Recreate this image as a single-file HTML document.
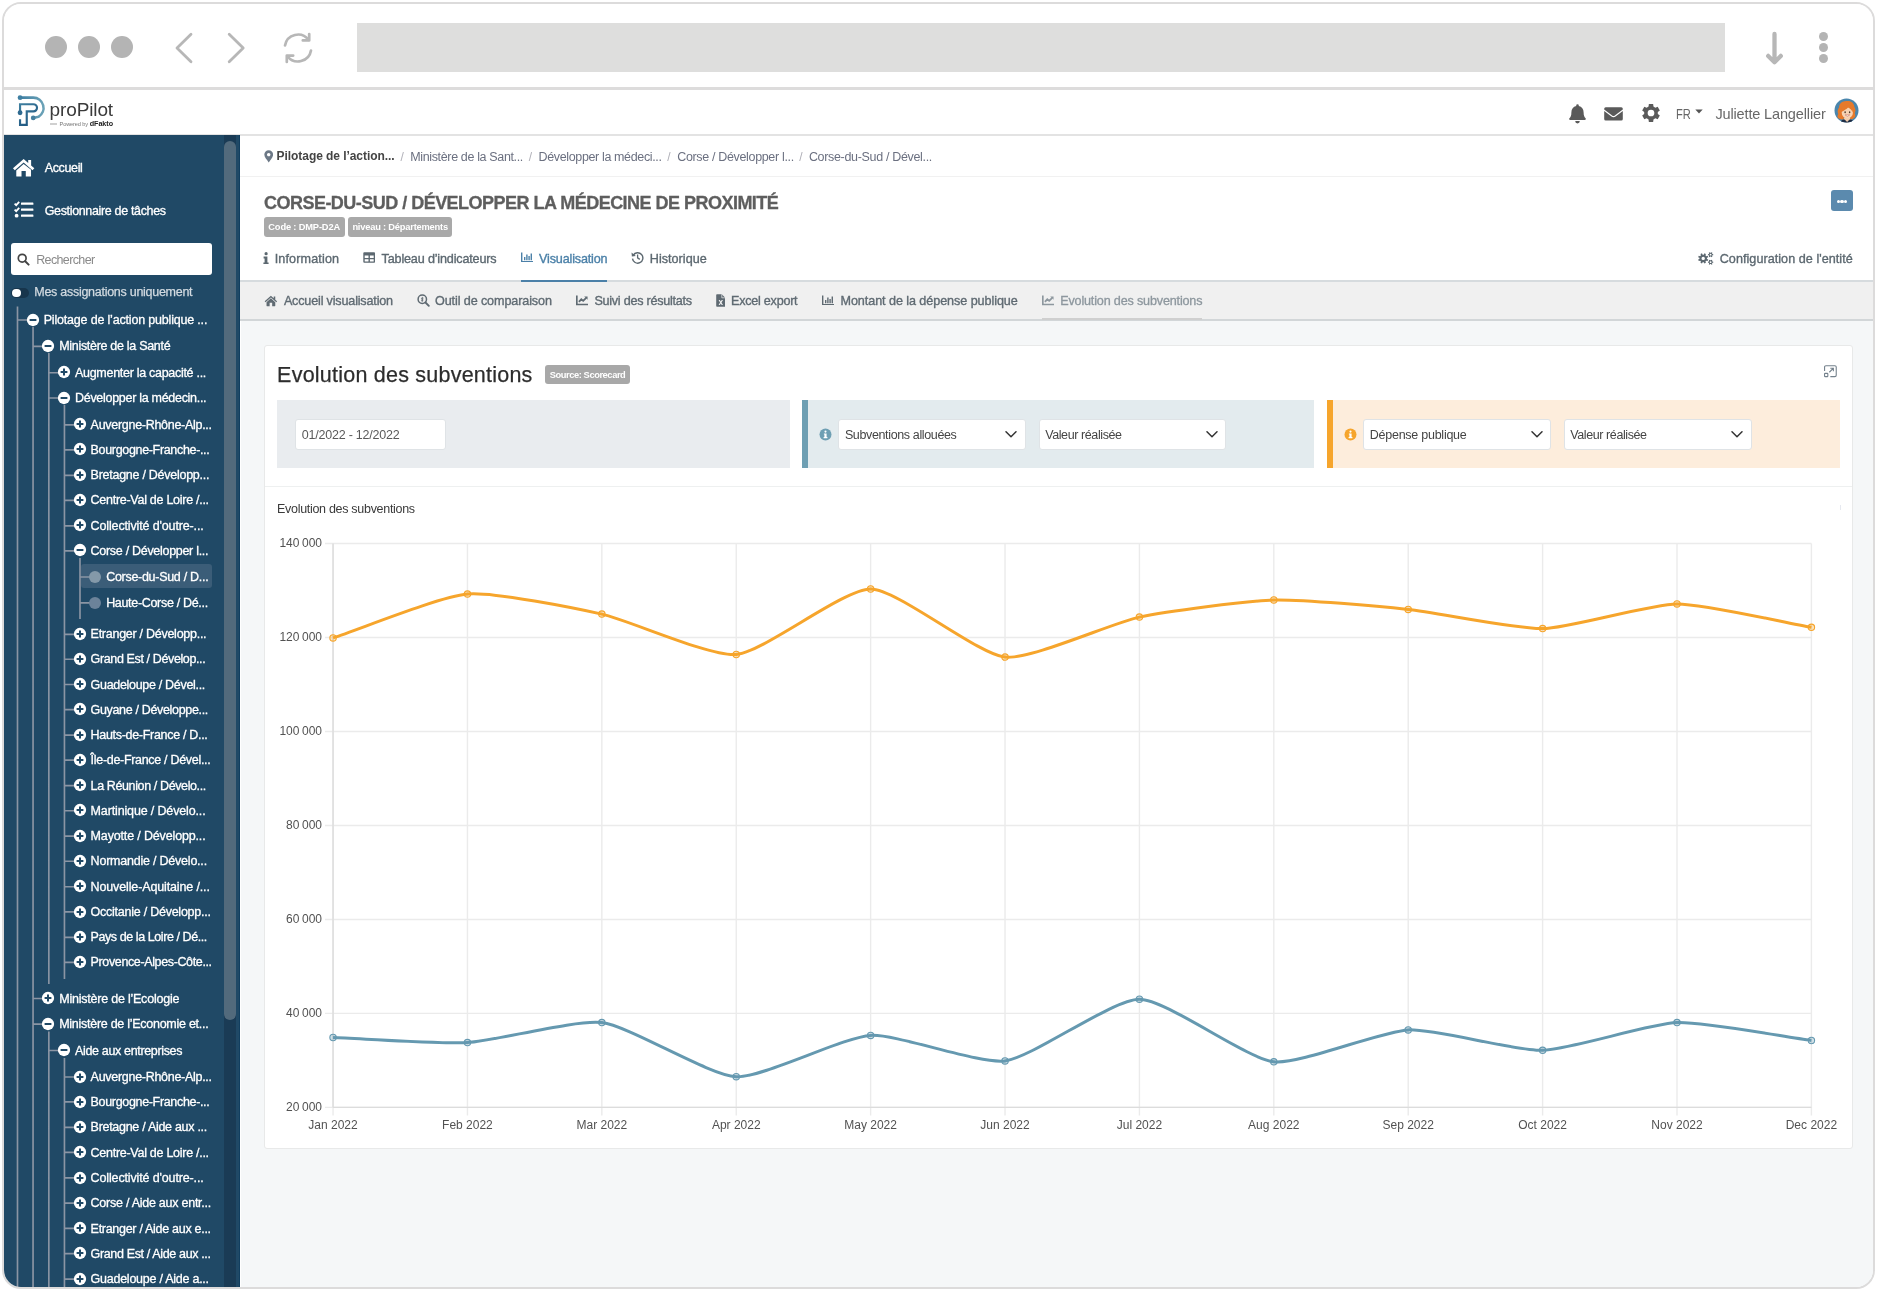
<!DOCTYPE html>
<html><head><meta charset="utf-8"><title>proPilot</title><style>
html,body{margin:0;padding:0;background:#fff;}
body{width:1879px;height:1293px;overflow:hidden;position:relative;font-family:"Liberation Sans",sans-serif;}
#frame{position:absolute;left:2px;top:2px;width:1869px;height:1283px;border:2px solid #dcdbdb;border-radius:19px;overflow:hidden;background:#fff;}
#in{position:absolute;left:-4px;top:-4px;width:1879px;height:1293px;will-change:transform;}
.b{position:absolute;display:block;}
.t{position:absolute;white-space:nowrap;font-family:"Liberation Sans",sans-serif;}
</style></head><body><div id="frame"><div id="in">
<div class="b" style="left:4.00px;top:4.00px;width:1869.00px;height:83.00px;background:#fff;"></div>
<div class="b" style="left:4.00px;top:87.00px;width:1869.00px;height:3.00px;background:#dddcdc;"></div>
<div class="b" style="left:45.10px;top:36.10px;width:21.80px;height:21.80px;background:#b4b4b4;border-radius:50%;"></div>
<div class="b" style="left:78.10px;top:36.10px;width:21.80px;height:21.80px;background:#b4b4b4;border-radius:50%;"></div>
<div class="b" style="left:111.10px;top:36.10px;width:21.80px;height:21.80px;background:#b4b4b4;border-radius:50%;"></div>
<svg class="b" style="left:170.00px;top:28.00px;" width="90.00" height="40.00" viewBox="170 28 90 40"><path d="M191,34.2 L177,48 L191,61.8 M229.2,34.2 L243.2,48 L229.2,61.8" fill="none" stroke="#b7b7b7" stroke-width="2.8" stroke-linecap="round" stroke-linejoin="round"/></svg>
<svg class="b" style="left:280.00px;top:30.00px;" width="36.00" height="36.00" viewBox="-18 -18 36 36"><g fill="none" stroke="#b7b7b7" stroke-width="2.7" stroke-linecap="round" stroke-linejoin="round"><path d="M-13,-2.5 A13.2,13.2 0 0 1 10.5,-8.2"/><path d="M13,2.5 A13.2,13.2 0 0 1 -10.5,8.2"/><path d="M11.2,-14 L11.2,-7.6 L4.8,-7.6"/><path d="M-11.2,14 L-11.2,7.6 L-4.8,7.6"/></g></svg>
<div class="b" style="left:357.00px;top:23.00px;width:1368.00px;height:49.00px;background:#dededd;"></div>
<svg class="b" style="left:1760.00px;top:28.00px;" width="30.00" height="40.00" viewBox="1760 28 30 40"><path d="M1774.5,34 V61.5 M1768.2,55.9 L1774.5,62.2 L1780.8,55.9" fill="none" stroke="#b7b7b7" stroke-width="4.3" stroke-linecap="round" stroke-linejoin="round"/></svg>
<div class="b" style="left:1819.00px;top:31.80px;width:9.00px;height:9.00px;background:#b4b4b4;border-radius:50%;"></div>
<div class="b" style="left:1819.00px;top:42.60px;width:9.00px;height:9.00px;background:#b4b4b4;border-radius:50%;"></div>
<div class="b" style="left:1819.00px;top:54.20px;width:9.00px;height:9.00px;background:#b4b4b4;border-radius:50%;"></div>
<div class="b" style="left:4.00px;top:90.00px;width:1869.00px;height:44.00px;background:#fff;"></div>
<div class="b" style="left:4.00px;top:134.00px;width:1869.00px;height:2.00px;background:#e3e3e3;"></div>
<svg class="b" style="left:14.00px;top:92.00px;" width="36.00" height="38.00" viewBox="14 92 36 38"><defs><linearGradient id="lg1" x1="0" y1="0" x2="1" y2="0"><stop offset="0" stop-color="#3f7fa2"/><stop offset="1" stop-color="#6ba2b7"/></linearGradient>
<linearGradient id="lg2" x1="0" y1="0" x2="0.6" y2="1"><stop offset="0" stop-color="#3f7f9f"/><stop offset="1" stop-color="#1f5781"/></linearGradient></defs>
<g fill="none">
<path d="M20.1,97.63 H33.3 A10.3,10.3 0 0 1 38.45,116.8 L33.3,117.9" stroke="url(#lg1)" stroke-width="2.6" stroke-linecap="round" stroke-linejoin="round"/>
<path d="M20.05,112.7 V104.2 H33.4 A3.62,3.62 0 0 1 33.4,111.44 H26.75 V124.9 H20.05 V119.2" stroke="url(#lg2)" stroke-width="2.15" stroke-linejoin="miter" stroke-linecap="butt"/>
</g>
<circle cx="20.07" cy="97.63" r="2.4" fill="#3f7fa2"/>
<circle cx="20.07" cy="112.74" r="2.4" fill="#2f6a90"/>
<circle cx="33.23" cy="117.94" r="2.4" fill="#447f9f"/></svg>
<span class="t" style="left:49.60px;top:94.54px;font-size:19px;line-height:30px;color:#3a3a3a;letter-spacing:-0.128px;">proPilot</span>
<div class="b" style="left:49.50px;top:123.30px;width:7.30px;height:1.30px;background:#d0d0d0;"></div>
<span class="t" style="left:59.60px;top:120.00px;font-size:5.6px;line-height:9px;color:#777;letter-spacing:-0.117px;">Powered by</span>
<span class="t" style="left:89.80px;top:118.23px;font-size:7.2px;line-height:12px;color:#222;letter-spacing:-0.067px;font-weight:700;">dFakto</span>
<svg class="b" style="left:1567.00px;top:102.00px;" width="21.00" height="23.00" viewBox="-10.5 -11.5 21 23"><path d="M0,-9.3 a1.3,1.3 0 0 1 1.3,1.3 v0.5 c3,0.7 4.8,3.2 4.8,6.3 c0,3.8 1,5 2,6 c0.5,0.5 0.2,1.6 -0.7,1.6 h-14.8 c-0.9,0 -1.2,-1.1 -0.7,-1.6 c1,-1 2,-2.2 2,-6 c0,-3.1 1.8,-5.6 4.8,-6.3 v-0.5 a1.3,1.3 0 0 1 1.3,-1.3z M-2.3,7.6 h4.6 a2.3,2.3 0 0 1 -4.6,0z" fill="#5a5a5a"/></svg>
<svg class="b" style="left:1604.30px;top:105.60px;" width="19.00" height="16.15" viewBox="0 0 20 17"><path d="M1.8,1.2 h16.4 a1.6,1.6 0 0 1 1.6,1.6 v0.9 l-8.4,6.4 a2.3,2.3 0 0 1 -2.8,0 l-8.4,-6.4 v-0.9 a1.6,1.6 0 0 1 1.6,-1.6z M0.2,5.3 l7.3,5.6 a4,4 0 0 0 5,0 l7.3,-5.6 v8.4 a1.6,1.6 0 0 1 -1.6,1.6 h-16.4 a1.6,1.6 0 0 1 -1.6,-1.6z" fill="#5a5a5a"/></svg>
<svg class="b" style="left:1640.90px;top:103.10px;" width="20.00" height="20.00" viewBox="-10 -10 20 20"><path fill-rule="evenodd" d="M2.45,6.45 L2.14,8.95 L-2.14,8.95 L-2.45,6.45 L-4.36,5.35 L-6.68,6.33 L-8.82,2.62 L-6.81,1.10 L-6.81,-1.10 L-8.82,-2.62 L-6.68,-6.33 L-4.36,-5.35 L-2.45,-6.45 L-2.14,-8.95 L2.14,-8.95 L2.45,-6.45 L4.36,-5.35 L6.68,-6.33 L8.82,-2.62 L6.81,-1.10 L6.81,1.10 L8.82,2.62 L6.68,6.33 L4.36,5.35Z M-3.35,0.00 a3.35,3.35 0 1,0 6.70,0 a3.35,3.35 0 1,0 -6.70,0Z" fill="#5a5a5a"/></svg>
<span class="t" style="left:1676.20px;top:103.16px;font-size:14.2px;line-height:23px;color:#666;letter-spacing:0.000px;transform:scaleX(0.7819);transform-origin:0 50%;">FR</span>
<svg class="b" style="left:1695.00px;top:109.00px;" width="8.00" height="5.00" viewBox="0 0 8 5"><path d="M0.3,0.6 H7.7 L4,4.4Z" fill="#555"/></svg>
<span class="t" style="left:1715.40px;top:103.16px;font-size:14.5px;line-height:23px;color:#686868;letter-spacing:-0.140px;">Juliette Langellier</span>
<svg class="b" style="left:1833.80px;top:98.40px;" width="25.00" height="25.00" viewBox="-12.5 -12.5 25 25"><defs><clipPath id="avc"><circle cx="0" cy="0" r="12"/></clipPath></defs>
<circle cx="0" cy="0" r="12" fill="#4a86ad"/>
<g clip-path="url(#avc)">
<path d="M-6.2,8.6 C-9.6,8.2 -9.4,5.2 -8.2,3.6 C-9.6,1.2 -8.6,-1.6 -7.4,-3 C-7.6,-7 -3.6,-10 0.6,-9.4 C4.2,-10 7.6,-7.4 7.8,-3.8 C9.4,-1.6 9.2,1 8.2,2.8 C9.4,4.8 8.8,7.6 6.4,8.2 C5.2,9.2 3.4,8.8 3,7.6 L-2.6,7.8 C-3,9 -5,9.4 -6.2,8.6Z" fill="#e67a2b"/>
<path d="M-2.4,7 L-2.8,10.6 L0.6,12.6 L4,10.6 L3.4,7Z" fill="#f3cdaa"/>
<ellipse cx="0.8" cy="2.2" rx="5.6" ry="5.8" fill="#f6d4b4"/>
<path d="M-5.2,1.6 C-5.4,-3.8 -1,-5.8 2.4,-5 C5.4,-4.4 6.8,-1.6 6.2,1.4 C5,-0.8 3.4,-2.2 1.6,-3 C0.2,-1.4 -2.6,0.2 -5.2,1.6Z" fill="#e67a2b"/>
<path d="M-6,13 C-5.6,9.6 -3.6,8.8 -1.6,9.2 L0.6,11.4 L2.8,9.2 C4.8,8.8 6.8,9.6 7.2,13Z" fill="#1f2d45"/>
<ellipse cx="-1.4" cy="1.8" rx="0.75" ry="0.95" fill="#4a3528"/><ellipse cx="3.1" cy="1.8" rx="0.75" ry="0.95" fill="#4a3528"/>
<path d="M-1.4,4.4 Q0.9,7.2 3.2,4.4Z" fill="#fff" stroke="#c0604a" stroke-width="0.5"/>
</g></svg>
<div class="b" style="left:4.00px;top:135.00px;width:236.00px;height:1158.00px;background:#204966;"></div>
<div class="b" style="left:224.20px;top:135.00px;width:11.80px;height:1158.00px;background:#1a3b55;"></div>
<div class="b" style="left:224.20px;top:141.00px;width:11.80px;height:878.80px;background:#526a7c;border-radius:6px;"></div>
<div class="b" style="left:239.20px;top:135.00px;width:0.80px;height:1158.00px;background:#123f60;"></div>
<svg class="b" style="left:11.70px;top:156.40px;" width="23.30" height="23.30" viewBox="0 0 24 24"><path d="M12,3 L1,12.6 L2.9,14.8 L12,6.8 L21.1,14.8 L23,12.6 L19.7,9.7 V4.2 H16.7 V7.1 Z" fill="#fff"/><path d="M12,8.3 L4.4,14.9 V20.6 a0.6,0.6 0 0 0 0.6,0.6 H9.8 V15.4 H14.2 V21.2 H19 a0.6,0.6 0 0 0 0.6,-0.6 V14.2 Z" fill="#fff"/></svg>
<span class="t" style="left:44.70px;top:158.22px;font-size:12.5px;line-height:20px;color:#ffffff;letter-spacing:-0.357px;-webkit-text-stroke:0.3px #ffffff;">Accueil</span>
<svg class="b" style="left:13.60px;top:200.80px;" width="20.00" height="17.50" viewBox="0 0 20 17.5"><g fill="#fff"><rect x="7" y="1.6" width="12.4" height="2.2" rx="0.4"/><rect x="7" y="7.6" width="12.4" height="2.2" rx="0.4"/><rect x="7" y="13.6" width="12.4" height="2.2" rx="0.4"/><circle cx="2.6" cy="14.7" r="1.9"/></g>
<path d="M0.6,2.6 L2.2,4.2 L5.2,0.9 M0.6,8.6 L2.2,10.2 L5.2,6.9" stroke="#fff" stroke-width="1.8" fill="none"/></svg>
<span class="t" style="left:44.70px;top:200.82px;font-size:12.5px;line-height:20px;color:#ffffff;letter-spacing:-0.343px;-webkit-text-stroke:0.3px #ffffff;">Gestionnaire de tâches</span>
<div class="b" style="left:11.00px;top:243.00px;width:201.20px;height:31.60px;background:#fff;border-radius:3px;"></div>
<svg class="b" style="left:16.50px;top:253.00px;" width="13.00" height="13.00" viewBox="0 0 13 13"><circle cx="5.2" cy="5.2" r="3.9" fill="none" stroke="#444" stroke-width="1.7"/><path d="M8.2,8.2 L11.6,11.6" stroke="#444" stroke-width="2" stroke-linecap="round"/></svg>
<span class="t" style="left:36.20px;top:249.82px;font-size:12.5px;line-height:20px;color:#8a8a8a;letter-spacing:-0.631px;">Rechercher</span>
<div class="b" style="left:11.30px;top:288.30px;width:17.70px;height:9.80px;background:#17354c;border-radius:5px;"></div>
<div class="b" style="left:12.10px;top:288.90px;width:8.60px;height:8.60px;background:#fff;border-radius:50%;"></div>
<span class="t" style="left:34.30px;top:282.42px;font-size:12.5px;line-height:20px;color:#d3dbe1;letter-spacing:-0.273px;-webkit-text-stroke:0.25px #d3dbe1;">Mes assignations uniquement</span>
<div class="b" style="left:81.00px;top:564.20px;width:131.10px;height:23.60px;background:#3b5d78;border-radius:3px;"></div>
<svg class="b" style="left:4.00px;top:135.00px;" width="236.00" height="1158.00" viewBox="4 135 236 1158"><path d="M17.50,306.50 V1293.00 M33.05,327.00 V1293.00 M48.85,353.00 V984.00 M64.45,405.00 V979.00 M80.00,558.00 V619.00 M48.85,1031.50 V1293.00 M64.45,1058.00 V1293.00 M17.50,320.00 H27.75 M33.05,346.30 H43.30 M48.85,372.70 H59.10 M48.85,398.00 H59.10 M64.45,424.80 H74.70 M64.45,449.80 H74.70 M64.45,475.30 H74.70 M64.45,500.30 H74.70 M64.45,525.80 H74.70 M64.45,550.80 H74.70 M80.00,577.00 H90.25 M80.00,602.90 H90.25 M64.45,634.30 H74.70 M64.45,659.20 H74.70 M64.45,684.50 H74.70 M64.45,709.60 H74.70 M64.45,735.10 H74.70 M64.45,760.10 H74.70 M64.45,785.60 H74.70 M64.45,810.70 H74.70 M64.45,836.10 H74.70 M64.45,861.20 H74.70 M64.45,886.70 H74.70 M64.45,911.90 H74.70 M64.45,937.30 H74.70 M64.45,962.30 H74.70 M33.05,998.50 H43.30 M33.05,1024.10 H43.30 M48.85,1050.50 H59.10 M64.45,1077.00 H74.70 M64.45,1101.90 H74.70 M64.45,1127.30 H74.70 M64.45,1152.40 H74.70 M64.45,1177.90 H74.70 M64.45,1203.10 H74.70 M64.45,1228.40 H74.70 M64.45,1253.60 H74.70 M64.45,1279.10 H74.70" fill="none" stroke="#8b95a4" stroke-width="1.65"/></svg>
<svg class="b" style="left:25.75px;top:312.60px;" width="14.00" height="14.00" viewBox="-7 -7 14 14"><circle cx="0" cy="0" r="6.15" fill="#fff"/><path d="M-3.4,0 H3.4" stroke="#204966" stroke-width="2"/></svg>
<span class="t" style="left:43.65px;top:310.12px;font-size:12.5px;line-height:20px;color:#ffffff;letter-spacing:-0.182px;-webkit-text-stroke:0.3px #ffffff;">Pilotage de l’action publique ...</span>
<svg class="b" style="left:41.30px;top:338.90px;" width="14.00" height="14.00" viewBox="-7 -7 14 14"><circle cx="0" cy="0" r="6.15" fill="#fff"/><path d="M-3.4,0 H3.4" stroke="#204966" stroke-width="2"/></svg>
<span class="t" style="left:59.20px;top:336.42px;font-size:12.5px;line-height:20px;color:#ffffff;letter-spacing:-0.301px;-webkit-text-stroke:0.3px #ffffff;">Ministère de la Santé</span>
<svg class="b" style="left:57.10px;top:365.30px;" width="14.00" height="14.00" viewBox="-7 -7 14 14"><circle cx="0" cy="0" r="6.15" fill="#fff"/><path d="M-3.4,0 H3.4 M0,-3.4 V3.4" stroke="#204966" stroke-width="2"/></svg>
<span class="t" style="left:75.00px;top:362.82px;font-size:12.5px;line-height:20px;color:#ffffff;letter-spacing:-0.291px;-webkit-text-stroke:0.3px #ffffff;">Augmenter la capacité ...</span>
<svg class="b" style="left:57.10px;top:390.60px;" width="14.00" height="14.00" viewBox="-7 -7 14 14"><circle cx="0" cy="0" r="6.15" fill="#fff"/><path d="M-3.4,0 H3.4" stroke="#204966" stroke-width="2"/></svg>
<span class="t" style="left:75.00px;top:388.12px;font-size:12.5px;line-height:20px;color:#ffffff;letter-spacing:-0.291px;-webkit-text-stroke:0.3px #ffffff;">Développer la médecin...</span>
<svg class="b" style="left:72.70px;top:417.40px;" width="14.00" height="14.00" viewBox="-7 -7 14 14"><circle cx="0" cy="0" r="6.15" fill="#fff"/><path d="M-3.4,0 H3.4 M0,-3.4 V3.4" stroke="#204966" stroke-width="2"/></svg>
<span class="t" style="left:90.60px;top:414.92px;font-size:12.5px;line-height:20px;color:#ffffff;letter-spacing:-0.289px;-webkit-text-stroke:0.3px #ffffff;">Auvergne-Rhône-Alp...</span>
<svg class="b" style="left:72.70px;top:442.40px;" width="14.00" height="14.00" viewBox="-7 -7 14 14"><circle cx="0" cy="0" r="6.15" fill="#fff"/><path d="M-3.4,0 H3.4 M0,-3.4 V3.4" stroke="#204966" stroke-width="2"/></svg>
<span class="t" style="left:90.60px;top:439.92px;font-size:12.5px;line-height:20px;color:#ffffff;letter-spacing:-0.332px;-webkit-text-stroke:0.3px #ffffff;">Bourgogne-Franche-...</span>
<svg class="b" style="left:72.70px;top:467.90px;" width="14.00" height="14.00" viewBox="-7 -7 14 14"><circle cx="0" cy="0" r="6.15" fill="#fff"/><path d="M-3.4,0 H3.4 M0,-3.4 V3.4" stroke="#204966" stroke-width="2"/></svg>
<span class="t" style="left:90.60px;top:465.42px;font-size:12.5px;line-height:20px;color:#ffffff;letter-spacing:-0.263px;-webkit-text-stroke:0.3px #ffffff;">Bretagne / Développ...</span>
<svg class="b" style="left:72.70px;top:492.90px;" width="14.00" height="14.00" viewBox="-7 -7 14 14"><circle cx="0" cy="0" r="6.15" fill="#fff"/><path d="M-3.4,0 H3.4 M0,-3.4 V3.4" stroke="#204966" stroke-width="2"/></svg>
<span class="t" style="left:90.60px;top:490.42px;font-size:12.5px;line-height:20px;color:#ffffff;letter-spacing:-0.276px;-webkit-text-stroke:0.3px #ffffff;">Centre-Val de Loire /...</span>
<svg class="b" style="left:72.70px;top:518.40px;" width="14.00" height="14.00" viewBox="-7 -7 14 14"><circle cx="0" cy="0" r="6.15" fill="#fff"/><path d="M-3.4,0 H3.4 M0,-3.4 V3.4" stroke="#204966" stroke-width="2"/></svg>
<span class="t" style="left:90.60px;top:515.93px;font-size:12.5px;line-height:20px;color:#ffffff;letter-spacing:-0.138px;-webkit-text-stroke:0.3px #ffffff;">Collectivité d'outre-...</span>
<svg class="b" style="left:72.70px;top:543.40px;" width="14.00" height="14.00" viewBox="-7 -7 14 14"><circle cx="0" cy="0" r="6.15" fill="#fff"/><path d="M-3.4,0 H3.4" stroke="#204966" stroke-width="2"/></svg>
<span class="t" style="left:90.60px;top:540.93px;font-size:12.5px;line-height:20px;color:#ffffff;letter-spacing:-0.294px;-webkit-text-stroke:0.3px #ffffff;">Corse / Développer l...</span>
<div class="b" style="left:89.15px;top:570.80px;width:12.20px;height:12.20px;background:#8499a9;border-radius:50%;"></div>
<span class="t" style="left:106.15px;top:567.12px;font-size:12.5px;line-height:20px;color:#ffffff;letter-spacing:-0.286px;-webkit-text-stroke:0.3px #ffffff;">Corse-du-Sud / D...</span>
<div class="b" style="left:89.15px;top:596.70px;width:12.20px;height:12.20px;background:#6c839a;border-radius:50%;"></div>
<span class="t" style="left:106.15px;top:593.02px;font-size:12.5px;line-height:20px;color:#ffffff;letter-spacing:-0.317px;-webkit-text-stroke:0.3px #ffffff;">Haute-Corse / Dé...</span>
<svg class="b" style="left:72.70px;top:626.90px;" width="14.00" height="14.00" viewBox="-7 -7 14 14"><circle cx="0" cy="0" r="6.15" fill="#fff"/><path d="M-3.4,0 H3.4 M0,-3.4 V3.4" stroke="#204966" stroke-width="2"/></svg>
<span class="t" style="left:90.60px;top:624.43px;font-size:12.5px;line-height:20px;color:#ffffff;letter-spacing:-0.268px;-webkit-text-stroke:0.3px #ffffff;">Etranger / Développ...</span>
<svg class="b" style="left:72.70px;top:651.80px;" width="14.00" height="14.00" viewBox="-7 -7 14 14"><circle cx="0" cy="0" r="6.15" fill="#fff"/><path d="M-3.4,0 H3.4 M0,-3.4 V3.4" stroke="#204966" stroke-width="2"/></svg>
<span class="t" style="left:90.60px;top:649.33px;font-size:12.5px;line-height:20px;color:#ffffff;letter-spacing:-0.376px;-webkit-text-stroke:0.3px #ffffff;">Grand Est / Dévelop...</span>
<svg class="b" style="left:72.70px;top:677.10px;" width="14.00" height="14.00" viewBox="-7 -7 14 14"><circle cx="0" cy="0" r="6.15" fill="#fff"/><path d="M-3.4,0 H3.4 M0,-3.4 V3.4" stroke="#204966" stroke-width="2"/></svg>
<span class="t" style="left:90.60px;top:674.62px;font-size:12.5px;line-height:20px;color:#ffffff;letter-spacing:-0.310px;-webkit-text-stroke:0.3px #ffffff;">Guadeloupe / Dével...</span>
<svg class="b" style="left:72.70px;top:702.20px;" width="14.00" height="14.00" viewBox="-7 -7 14 14"><circle cx="0" cy="0" r="6.15" fill="#fff"/><path d="M-3.4,0 H3.4 M0,-3.4 V3.4" stroke="#204966" stroke-width="2"/></svg>
<span class="t" style="left:90.60px;top:699.73px;font-size:12.5px;line-height:20px;color:#ffffff;letter-spacing:-0.337px;-webkit-text-stroke:0.3px #ffffff;">Guyane / Développe...</span>
<svg class="b" style="left:72.70px;top:727.70px;" width="14.00" height="14.00" viewBox="-7 -7 14 14"><circle cx="0" cy="0" r="6.15" fill="#fff"/><path d="M-3.4,0 H3.4 M0,-3.4 V3.4" stroke="#204966" stroke-width="2"/></svg>
<span class="t" style="left:90.60px;top:725.23px;font-size:12.5px;line-height:20px;color:#ffffff;letter-spacing:-0.307px;-webkit-text-stroke:0.3px #ffffff;">Hauts-de-France / D...</span>
<svg class="b" style="left:72.70px;top:752.70px;" width="14.00" height="14.00" viewBox="-7 -7 14 14"><circle cx="0" cy="0" r="6.15" fill="#fff"/><path d="M-3.4,0 H3.4 M0,-3.4 V3.4" stroke="#204966" stroke-width="2"/></svg>
<span class="t" style="left:90.60px;top:750.23px;font-size:12.5px;line-height:20px;color:#ffffff;letter-spacing:-0.306px;-webkit-text-stroke:0.3px #ffffff;">Île-de-France / Dével...</span>
<svg class="b" style="left:72.70px;top:778.20px;" width="14.00" height="14.00" viewBox="-7 -7 14 14"><circle cx="0" cy="0" r="6.15" fill="#fff"/><path d="M-3.4,0 H3.4 M0,-3.4 V3.4" stroke="#204966" stroke-width="2"/></svg>
<span class="t" style="left:90.60px;top:775.73px;font-size:12.5px;line-height:20px;color:#ffffff;letter-spacing:-0.381px;-webkit-text-stroke:0.3px #ffffff;">La Réunion / Dévelo...</span>
<svg class="b" style="left:72.70px;top:803.30px;" width="14.00" height="14.00" viewBox="-7 -7 14 14"><circle cx="0" cy="0" r="6.15" fill="#fff"/><path d="M-3.4,0 H3.4 M0,-3.4 V3.4" stroke="#204966" stroke-width="2"/></svg>
<span class="t" style="left:90.60px;top:800.83px;font-size:12.5px;line-height:20px;color:#ffffff;letter-spacing:-0.146px;-webkit-text-stroke:0.3px #ffffff;">Martinique / Dévelo...</span>
<svg class="b" style="left:72.70px;top:828.70px;" width="14.00" height="14.00" viewBox="-7 -7 14 14"><circle cx="0" cy="0" r="6.15" fill="#fff"/><path d="M-3.4,0 H3.4 M0,-3.4 V3.4" stroke="#204966" stroke-width="2"/></svg>
<span class="t" style="left:90.60px;top:826.23px;font-size:12.5px;line-height:20px;color:#ffffff;letter-spacing:-0.153px;-webkit-text-stroke:0.3px #ffffff;">Mayotte / Développ...</span>
<svg class="b" style="left:72.70px;top:853.80px;" width="14.00" height="14.00" viewBox="-7 -7 14 14"><circle cx="0" cy="0" r="6.15" fill="#fff"/><path d="M-3.4,0 H3.4 M0,-3.4 V3.4" stroke="#204966" stroke-width="2"/></svg>
<span class="t" style="left:90.60px;top:851.33px;font-size:12.5px;line-height:20px;color:#ffffff;letter-spacing:-0.219px;-webkit-text-stroke:0.3px #ffffff;">Normandie / Dévelo...</span>
<svg class="b" style="left:72.70px;top:879.30px;" width="14.00" height="14.00" viewBox="-7 -7 14 14"><circle cx="0" cy="0" r="6.15" fill="#fff"/><path d="M-3.4,0 H3.4 M0,-3.4 V3.4" stroke="#204966" stroke-width="2"/></svg>
<span class="t" style="left:90.60px;top:876.83px;font-size:12.5px;line-height:20px;color:#ffffff;letter-spacing:-0.134px;-webkit-text-stroke:0.3px #ffffff;">Nouvelle-Aquitaine /...</span>
<svg class="b" style="left:72.70px;top:904.50px;" width="14.00" height="14.00" viewBox="-7 -7 14 14"><circle cx="0" cy="0" r="6.15" fill="#fff"/><path d="M-3.4,0 H3.4 M0,-3.4 V3.4" stroke="#204966" stroke-width="2"/></svg>
<span class="t" style="left:90.60px;top:902.02px;font-size:12.5px;line-height:20px;color:#ffffff;letter-spacing:-0.246px;-webkit-text-stroke:0.3px #ffffff;">Occitanie / Développ...</span>
<svg class="b" style="left:72.70px;top:929.90px;" width="14.00" height="14.00" viewBox="-7 -7 14 14"><circle cx="0" cy="0" r="6.15" fill="#fff"/><path d="M-3.4,0 H3.4 M0,-3.4 V3.4" stroke="#204966" stroke-width="2"/></svg>
<span class="t" style="left:90.60px;top:927.43px;font-size:12.5px;line-height:20px;color:#ffffff;letter-spacing:-0.423px;-webkit-text-stroke:0.3px #ffffff;">Pays de la Loire / Dé...</span>
<svg class="b" style="left:72.70px;top:954.90px;" width="14.00" height="14.00" viewBox="-7 -7 14 14"><circle cx="0" cy="0" r="6.15" fill="#fff"/><path d="M-3.4,0 H3.4 M0,-3.4 V3.4" stroke="#204966" stroke-width="2"/></svg>
<span class="t" style="left:90.60px;top:952.43px;font-size:12.5px;line-height:20px;color:#ffffff;letter-spacing:-0.369px;-webkit-text-stroke:0.3px #ffffff;">Provence-Alpes-Côte...</span>
<svg class="b" style="left:41.30px;top:991.10px;" width="14.00" height="14.00" viewBox="-7 -7 14 14"><circle cx="0" cy="0" r="6.15" fill="#fff"/><path d="M-3.4,0 H3.4 M0,-3.4 V3.4" stroke="#204966" stroke-width="2"/></svg>
<span class="t" style="left:59.20px;top:988.62px;font-size:12.5px;line-height:20px;color:#ffffff;letter-spacing:-0.220px;-webkit-text-stroke:0.3px #ffffff;">Ministère de l’Ecologie</span>
<svg class="b" style="left:41.30px;top:1016.70px;" width="14.00" height="14.00" viewBox="-7 -7 14 14"><circle cx="0" cy="0" r="6.15" fill="#fff"/><path d="M-3.4,0 H3.4" stroke="#204966" stroke-width="2"/></svg>
<span class="t" style="left:59.20px;top:1014.23px;font-size:12.5px;line-height:20px;color:#ffffff;letter-spacing:-0.270px;-webkit-text-stroke:0.3px #ffffff;">Ministère de l’Economie et...</span>
<svg class="b" style="left:57.10px;top:1043.10px;" width="14.00" height="14.00" viewBox="-7 -7 14 14"><circle cx="0" cy="0" r="6.15" fill="#fff"/><path d="M-3.4,0 H3.4" stroke="#204966" stroke-width="2"/></svg>
<span class="t" style="left:75.00px;top:1040.63px;font-size:12.5px;line-height:20px;color:#ffffff;letter-spacing:-0.343px;-webkit-text-stroke:0.3px #ffffff;">Aide aux entreprises</span>
<svg class="b" style="left:72.70px;top:1069.60px;" width="14.00" height="14.00" viewBox="-7 -7 14 14"><circle cx="0" cy="0" r="6.15" fill="#fff"/><path d="M-3.4,0 H3.4 M0,-3.4 V3.4" stroke="#204966" stroke-width="2"/></svg>
<span class="t" style="left:90.60px;top:1067.13px;font-size:12.5px;line-height:20px;color:#ffffff;letter-spacing:-0.289px;-webkit-text-stroke:0.3px #ffffff;">Auvergne-Rhône-Alp...</span>
<svg class="b" style="left:72.70px;top:1094.50px;" width="14.00" height="14.00" viewBox="-7 -7 14 14"><circle cx="0" cy="0" r="6.15" fill="#fff"/><path d="M-3.4,0 H3.4 M0,-3.4 V3.4" stroke="#204966" stroke-width="2"/></svg>
<span class="t" style="left:90.60px;top:1092.03px;font-size:12.5px;line-height:20px;color:#ffffff;letter-spacing:-0.332px;-webkit-text-stroke:0.3px #ffffff;">Bourgogne-Franche-...</span>
<svg class="b" style="left:72.70px;top:1119.90px;" width="14.00" height="14.00" viewBox="-7 -7 14 14"><circle cx="0" cy="0" r="6.15" fill="#fff"/><path d="M-3.4,0 H3.4 M0,-3.4 V3.4" stroke="#204966" stroke-width="2"/></svg>
<span class="t" style="left:90.60px;top:1117.43px;font-size:12.5px;line-height:20px;color:#ffffff;letter-spacing:-0.287px;-webkit-text-stroke:0.3px #ffffff;">Bretagne / Aide aux ...</span>
<svg class="b" style="left:72.70px;top:1145.00px;" width="14.00" height="14.00" viewBox="-7 -7 14 14"><circle cx="0" cy="0" r="6.15" fill="#fff"/><path d="M-3.4,0 H3.4 M0,-3.4 V3.4" stroke="#204966" stroke-width="2"/></svg>
<span class="t" style="left:90.60px;top:1142.53px;font-size:12.5px;line-height:20px;color:#ffffff;letter-spacing:-0.276px;-webkit-text-stroke:0.3px #ffffff;">Centre-Val de Loire /...</span>
<svg class="b" style="left:72.70px;top:1170.50px;" width="14.00" height="14.00" viewBox="-7 -7 14 14"><circle cx="0" cy="0" r="6.15" fill="#fff"/><path d="M-3.4,0 H3.4 M0,-3.4 V3.4" stroke="#204966" stroke-width="2"/></svg>
<span class="t" style="left:90.60px;top:1168.03px;font-size:12.5px;line-height:20px;color:#ffffff;letter-spacing:-0.138px;-webkit-text-stroke:0.3px #ffffff;">Collectivité d'outre-...</span>
<svg class="b" style="left:72.70px;top:1195.70px;" width="14.00" height="14.00" viewBox="-7 -7 14 14"><circle cx="0" cy="0" r="6.15" fill="#fff"/><path d="M-3.4,0 H3.4 M0,-3.4 V3.4" stroke="#204966" stroke-width="2"/></svg>
<span class="t" style="left:90.60px;top:1193.23px;font-size:12.5px;line-height:20px;color:#ffffff;letter-spacing:-0.253px;-webkit-text-stroke:0.3px #ffffff;">Corse / Aide aux entr...</span>
<svg class="b" style="left:72.70px;top:1221.00px;" width="14.00" height="14.00" viewBox="-7 -7 14 14"><circle cx="0" cy="0" r="6.15" fill="#fff"/><path d="M-3.4,0 H3.4 M0,-3.4 V3.4" stroke="#204966" stroke-width="2"/></svg>
<span class="t" style="left:90.60px;top:1218.53px;font-size:12.5px;line-height:20px;color:#ffffff;letter-spacing:-0.290px;-webkit-text-stroke:0.3px #ffffff;">Etranger / Aide aux e...</span>
<svg class="b" style="left:72.70px;top:1246.20px;" width="14.00" height="14.00" viewBox="-7 -7 14 14"><circle cx="0" cy="0" r="6.15" fill="#fff"/><path d="M-3.4,0 H3.4 M0,-3.4 V3.4" stroke="#204966" stroke-width="2"/></svg>
<span class="t" style="left:90.60px;top:1243.73px;font-size:12.5px;line-height:20px;color:#ffffff;letter-spacing:-0.356px;-webkit-text-stroke:0.3px #ffffff;">Grand Est / Aide aux ...</span>
<svg class="b" style="left:72.70px;top:1271.70px;" width="14.00" height="14.00" viewBox="-7 -7 14 14"><circle cx="0" cy="0" r="6.15" fill="#fff"/><path d="M-3.4,0 H3.4 M0,-3.4 V3.4" stroke="#204966" stroke-width="2"/></svg>
<span class="t" style="left:90.60px;top:1269.23px;font-size:12.5px;line-height:20px;color:#ffffff;letter-spacing:-0.250px;-webkit-text-stroke:0.3px #ffffff;">Guadeloupe / Aide a...</span>
<div class="b" style="left:240.00px;top:136.00px;width:1633.00px;height:145.00px;background:#fff;"></div>
<div class="b" style="left:240.00px;top:176.00px;width:1633.00px;height:1.20px;background:#f1f1f1;"></div>
<svg class="b" style="left:264.10px;top:150.20px;" width="9.40" height="12.60" viewBox="0 0 9.4 12.6"><path fill-rule="evenodd" d="M4.7,0.2 a4.4,4.4 0 0 1 4.4,4.4 c0,2.6 -2.6,5.2 -4.4,7.8 c-1.8,-2.6 -4.4,-5.2 -4.4,-7.8 a4.4,4.4 0 0 1 4.4,-4.4z M4.7,2.9 a1.7,1.7 0 1 0 0.001,0z" fill="#6c7886"/></svg>
<span class="t" style="left:276.60px;top:147.02px;font-size:12px;line-height:19px;color:#444;letter-spacing:-0.063px;font-weight:700;">Pilotage de l’action...</span>
<span class="t" style="left:400.60px;top:148.12px;font-size:12px;line-height:19px;color:#b0b0b8;letter-spacing:0.000px;">/</span>
<span class="t" style="left:410.20px;top:146.53px;font-size:12.5px;line-height:20px;color:#6b7080;letter-spacing:-0.352px;">Ministère de la Sant...</span>
<span class="t" style="left:528.70px;top:148.12px;font-size:12px;line-height:19px;color:#b0b0b8;letter-spacing:0.000px;">/</span>
<span class="t" style="left:538.60px;top:146.53px;font-size:12.5px;line-height:20px;color:#6b7080;letter-spacing:-0.366px;">Développer la médeci...</span>
<span class="t" style="left:667.20px;top:148.12px;font-size:12px;line-height:19px;color:#b0b0b8;letter-spacing:0.000px;">/</span>
<span class="t" style="left:677.20px;top:146.53px;font-size:12.5px;line-height:20px;color:#6b7080;letter-spacing:-0.337px;">Corse / Développer l...</span>
<span class="t" style="left:799.20px;top:148.12px;font-size:12px;line-height:19px;color:#b0b0b8;letter-spacing:0.000px;">/</span>
<span class="t" style="left:808.90px;top:146.53px;font-size:12.5px;line-height:20px;color:#6b7080;letter-spacing:-0.327px;">Corse-du-Sud / Dével...</span>
<span class="t" style="left:264.00px;top:188.72px;font-size:18px;line-height:29px;color:#5e5e5e;letter-spacing:-0.522px;font-weight:700;-webkit-text-stroke:0.3px #5e5e5e;">CORSE-DU-SUD / DÉVELOPPER LA MÉDECINE DE PROXIMITÉ</span>
<div class="b" style="left:263.60px;top:217.40px;width:81.40px;height:19.40px;background:#a9a9a9;border-radius:3px;"></div>
<div class="b" style="left:347.70px;top:217.40px;width:104.70px;height:19.40px;background:#a9a9a9;border-radius:3px;"></div>
<span class="t" style="left:268.30px;top:220.47px;font-size:9.3px;line-height:15px;color:#fff;letter-spacing:-0.156px;font-weight:700;">Code : DMP-D2A</span>
<span class="t" style="left:352.40px;top:220.47px;font-size:9.3px;line-height:15px;color:#fff;letter-spacing:-0.198px;font-weight:700;">niveau : Départements</span>
<div class="b" style="left:1830.80px;top:189.90px;width:22.30px;height:21.40px;background:#5b8aae;border-radius:3px;"></div>
<div class="b" style="left:1836.80px;top:199.90px;width:3.20px;height:3.20px;background:#fff;border-radius:50%;"></div>
<div class="b" style="left:1840.40px;top:199.90px;width:3.20px;height:3.20px;background:#fff;border-radius:50%;"></div>
<div class="b" style="left:1844.00px;top:199.90px;width:3.20px;height:3.20px;background:#fff;border-radius:50%;"></div>
<svg class="b" style="left:263.00px;top:251.60px;" width="6.00" height="12.50" viewBox="0 0 6 12.5"><circle cx="3.1" cy="1.7" r="1.6" fill="#5c6870"/><path d="M0.6,4.6 H4.4 V10.4 H5.6 V12.2 H0.4 V10.4 H1.6 V6.4 H0.6Z" fill="#5c6870"/></svg>
<span class="t" style="left:274.70px;top:248.73px;font-size:12.6px;line-height:20px;color:#5c6870;letter-spacing:0.133px;-webkit-text-stroke:0.35px #5c6870;">Information</span>
<svg class="b" style="left:363.00px;top:251.80px;" width="12.40" height="11.00" viewBox="0 0 12.4 11"><path fill-rule="evenodd" d="M1.2,0.3 H11.2 a0.9,0.9 0 0 1 0.9,0.9 V9.8 a0.9,0.9 0 0 1 -0.9,0.9 H1.2 a0.9,0.9 0 0 1 -0.9,-0.9 V1.2 a0.9,0.9 0 0 1 0.9,-0.9z M1.7,3.6 V5.9 H5.5 V3.6z M6.9,3.6 V5.9 H10.7 V3.6z M1.7,7.2 V9.4 H5.5 V7.2z M6.9,7.2 V9.4 H10.7 V7.2z" fill="#5c6870"/></svg>
<span class="t" style="left:381.60px;top:248.73px;font-size:12.6px;line-height:20px;color:#5c6870;letter-spacing:-0.166px;-webkit-text-stroke:0.35px #5c6870;">Tableau d’indicateurs</span>
<svg class="b" style="left:520.80px;top:251.80px;" width="12.40" height="10.40" viewBox="0 0 12.4 10.4"><path d="M0.7,0.4 V9.6 H12" fill="none" stroke="#4b80a8" stroke-width="1.4"/><path d="M3,5 h1.4 v3.2 h-1.4z M5.2,2.6 h1.4 v5.6 h-1.4z M7.4,4 h1.4 v4.2 h-1.4z M9.6,1.6 h1.4 v6.6 h-1.4z" fill="#4b80a8"/></svg>
<span class="t" style="left:539.10px;top:248.73px;font-size:12.6px;line-height:20px;color:#4b80a8;letter-spacing:-0.170px;-webkit-text-stroke:0.35px #4b80a8;">Visualisation</span>
<div class="b" style="left:520.60px;top:279.60px;width:86.80px;height:2.20px;background:#4b80a8;"></div>
<svg class="b" style="left:631.00px;top:251.40px;" width="13.00" height="13.00" viewBox="0 0 13 13"><path d="M2.2,4.3 A5.2,5.2 0 1 1 1.5,7.6" fill="none" stroke="#5c6870" stroke-width="1.4"/><path d="M0.5,1.6 L0.9,5.6 L4.8,5.1Z" fill="#5c6870"/><path d="M6.6,3.6 V6.9 L8.8,8.4" fill="none" stroke="#5c6870" stroke-width="1.3"/></svg>
<span class="t" style="left:649.80px;top:248.73px;font-size:12.6px;line-height:20px;color:#5c6870;letter-spacing:0.027px;-webkit-text-stroke:0.35px #5c6870;">Historique</span>
<svg class="b" style="left:1698.00px;top:252.30px;" width="16.00" height="13.00" viewBox="0 0 16 13"><path fill-rule="evenodd" d="M8.96,6.96 L10.26,7.61 L9.63,9.12 L8.26,8.66 L7.46,9.46 L7.92,10.83 L6.41,11.46 L5.76,10.16 L4.64,10.16 L3.99,11.46 L2.48,10.83 L2.94,9.46 L2.14,8.66 L0.77,9.12 L0.14,7.61 L1.44,6.96 L1.44,5.84 L0.14,5.19 L0.77,3.68 L2.14,4.14 L2.94,3.34 L2.48,1.97 L3.99,1.34 L4.64,2.64 L5.76,2.64 L6.41,1.34 L7.92,1.97 L7.46,3.34 L8.26,4.14 L9.63,3.68 L10.26,5.19 L8.96,5.84Z M3.50,6.40 a1.70,1.70 0 1,0 3.40,0 a1.70,1.70 0 1,0 -3.40,0Z" fill="#5c6870"/><path fill-rule="evenodd" d="M14.40,2.09 L15.24,2.14 L15.24,3.26 L14.40,3.31 L14.03,3.96 L14.41,4.71 L13.43,5.27 L12.98,4.56 L12.22,4.56 L11.77,5.27 L10.79,4.71 L11.17,3.96 L10.80,3.31 L9.96,3.26 L9.96,2.14 L10.80,2.09 L11.17,1.44 L10.79,0.69 L11.77,0.13 L12.22,0.84 L12.98,0.84 L13.43,0.13 L14.41,0.69 L14.03,1.44Z M11.70,2.70 a0.90,0.90 0 1,0 1.80,0 a0.90,0.90 0 1,0 -1.80,0Z" fill="#5c6870"/><path fill-rule="evenodd" d="M14.40,9.59 L15.24,9.64 L15.24,10.76 L14.40,10.81 L14.03,11.46 L14.41,12.21 L13.43,12.77 L12.98,12.06 L12.22,12.06 L11.77,12.77 L10.79,12.21 L11.17,11.46 L10.80,10.81 L9.96,10.76 L9.96,9.64 L10.80,9.59 L11.17,8.94 L10.79,8.19 L11.77,7.63 L12.22,8.34 L12.98,8.34 L13.43,7.63 L14.41,8.19 L14.03,8.94Z M11.70,10.20 a0.90,0.90 0 1,0 1.80,0 a0.90,0.90 0 1,0 -1.80,0Z" fill="#5c6870"/></svg>
<span class="t" style="left:1719.70px;top:248.73px;font-size:12.6px;line-height:20px;color:#5c6870;letter-spacing:0.048px;-webkit-text-stroke:0.35px #5c6870;">Configuration de l'entité</span>
<div class="b" style="left:240.00px;top:280.20px;width:1633.00px;height:1.80px;background:#d6dbde;"></div>
<div class="b" style="left:520.60px;top:279.60px;width:86.80px;height:2.20px;background:#4b80a8;"></div>
<div class="b" style="left:240.00px;top:282.00px;width:1633.00px;height:37.40px;background:#f0f0f0;"></div>
<div class="b" style="left:240.00px;top:319.40px;width:1633.00px;height:1.80px;background:#d2d6d8;"></div>
<div class="b" style="left:240.00px;top:321.20px;width:1633.00px;height:971.80px;background:#f5f7f8;"></div>
<div class="b" style="left:240.00px;top:321.20px;width:1.20px;height:971.80px;background:#fff;"></div>
<svg class="b" style="left:263.80px;top:293.50px;" width="13.80" height="13.80" viewBox="0 0 24 24"><path d="M12,3.2 L1.2,12.6 L2.6,14.2 L12,6 L21.4,14.2 L22.8,12.6 L19.6,9.8 V4.4 H16.9 V7.5 Z" fill="#5f6a72"/><path d="M12,7.6 L4.4,14.2 V20.6 a0.6,0.6 0 0 0 0.6,0.6 H9.8 V15.4 H14.2 V21.2 H19 a0.6,0.6 0 0 0 0.6,-0.6 V14.2 Z" fill="#5f6a72"/></svg>
<span class="t" style="left:283.90px;top:291.13px;font-size:12.6px;line-height:20px;color:#5f6a72;letter-spacing:-0.174px;-webkit-text-stroke:0.35px #5f6a72;">Accueil visualisation</span>
<svg class="b" style="left:416.60px;top:293.60px;" width="13.00" height="13.00" viewBox="0 0 13 13"><circle cx="5.3" cy="5.3" r="4.2" fill="none" stroke="#5f6a72" stroke-width="1.5"/><path d="M8.5,8.5 L11.8,11.8" stroke="#5f6a72" stroke-width="1.9" stroke-linecap="round"/><path d="M5.3,2.9 V7.7 M6.5,4.1 H4.9 a0.7,0.7 0 0 0 0,1.3 H5.7 a0.7,0.7 0 0 1 0,1.3 H4.1" fill="none" stroke="#5f6a72" stroke-width="0.8"/></svg>
<span class="t" style="left:435.00px;top:291.13px;font-size:12.6px;line-height:20px;color:#5f6a72;letter-spacing:-0.108px;-webkit-text-stroke:0.35px #5f6a72;">Outil de comparaison</span>
<svg class="b" style="left:575.60px;top:295.30px;" width="12.60" height="10.40" viewBox="0 0 12.6 10.4"><path d="M0.8,0.4 V9.5 H12.2" fill="none" stroke="#5f6a72" stroke-width="1.7"/><path d="M2.9,6.9 L5.3,4.3 L7.2,5.9 L10.2,2.9" fill="none" stroke="#5f6a72" stroke-width="1.8"/><path d="M8.2,1.4 H11.6 V4.8Z" fill="#5f6a72"/></svg>
<span class="t" style="left:594.40px;top:291.13px;font-size:12.6px;line-height:20px;color:#5f6a72;letter-spacing:-0.255px;-webkit-text-stroke:0.35px #5f6a72;">Suivi des résultats</span>
<svg class="b" style="left:715.60px;top:293.60px;" width="9.60" height="13.00" viewBox="0 0 9.6 13"><path fill-rule="evenodd" d="M1,0.2 H5.8 L9.4,3.8 V12 a0.8,0.8 0 0 1 -0.8,0.8 H1 a0.8,0.8 0 0 1 -0.8,-0.8 V1 a0.8,0.8 0 0 1 0.8,-0.8z M2.6,6 L4.1,8.5 L2.6,11 H3.9 L4.8,9.4 L5.7,11 H7 L5.5,8.5 L7,6 H5.7 L4.8,7.6 L3.9,6z" fill="#5f6a72"/><path d="M5.8,0.2 V3.8 H9.4" fill="none" stroke="#f0f0f0" stroke-width="0.7"/></svg>
<span class="t" style="left:731.00px;top:291.13px;font-size:12.6px;line-height:20px;color:#5f6a72;letter-spacing:-0.244px;-webkit-text-stroke:0.35px #5f6a72;">Excel export</span>
<svg class="b" style="left:821.80px;top:294.60px;" width="12.40" height="10.40" viewBox="0 0 12.4 10.4"><path d="M0.7,0.4 V9.6 H12" fill="none" stroke="#5f6a72" stroke-width="1.4"/><path d="M3,5 h1.4 v3.2 h-1.4z M5.2,2.6 h1.4 v5.6 h-1.4z M7.4,4 h1.4 v4.2 h-1.4z M9.6,1.6 h1.4 v6.6 h-1.4z" fill="#5f6a72"/></svg>
<span class="t" style="left:840.50px;top:291.13px;font-size:12.6px;line-height:20px;color:#5f6a72;letter-spacing:-0.068px;-webkit-text-stroke:0.35px #5f6a72;">Montant de la dépense publique</span>
<svg class="b" style="left:1041.60px;top:295.30px;" width="12.60" height="10.40" viewBox="0 0 12.6 10.4"><path d="M0.8,0.4 V9.5 H12.2" fill="none" stroke="#8d979e" stroke-width="1.7"/><path d="M2.9,6.9 L5.3,4.3 L7.2,5.9 L10.2,2.9" fill="none" stroke="#8d979e" stroke-width="1.8"/><path d="M8.2,1.4 H11.6 V4.8Z" fill="#8d979e"/></svg>
<span class="t" style="left:1060.20px;top:291.13px;font-size:12.6px;line-height:20px;color:#8d979e;letter-spacing:-0.168px;-webkit-text-stroke:0.3px #8d979e;">Evolution des subventions</span>
<div class="b" style="left:1041.70px;top:318.00px;width:160.70px;height:2.00px;background:#cfcfcf;"></div>
<div class="b" style="left:264.00px;top:345.00px;width:1589.00px;height:804.00px;background:#fff;border:1px solid #e8e9e9;box-sizing:border-box;border-radius:3px;"></div>
<span class="t" style="left:277.10px;top:358.29px;font-size:21.5px;line-height:34px;color:#2d2d2d;letter-spacing:0.228px;-webkit-text-stroke:0.25px #2d2d2d;">Evolution des subventions</span>
<div class="b" style="left:544.90px;top:365.40px;width:85.30px;height:19.00px;background:#a8a8a8;border-radius:3px;"></div>
<span class="t" style="left:549.70px;top:367.67px;font-size:9.3px;line-height:15px;color:#fff;letter-spacing:-0.412px;font-weight:700;">Source: Scorecard</span>
<svg class="b" style="left:1824.20px;top:365.20px;" width="13.00" height="12.60" viewBox="0 0 13.6 12.8"><g fill="none" stroke="#74818c" stroke-width="1.15"><path d="M0.6,6 V2 a1.4,1.4 0 0 1 1.4,-1.4 H11.4 a1.4,1.4 0 0 1 1.4,1.4 V10.6 a1.4,1.4 0 0 1 -1.4,1.4 H6.6"/><rect x="0.6" y="8.6" width="3.4" height="3.4" rx="0.7"/><path d="M5.6,7.4 L9.6,3.4 M6.6,3.2 H9.8 V6.4"/></g></svg>
<div class="b" style="left:276.60px;top:400.40px;width:513.40px;height:67.40px;background:#e9ecef;"></div>
<div class="b" style="left:802.30px;top:400.40px;width:512.10px;height:67.40px;background:#e3ebee;"></div>
<div class="b" style="left:802.30px;top:400.40px;width:6.00px;height:67.40px;background:#6e9fb3;"></div>
<div class="b" style="left:1326.90px;top:400.40px;width:513.10px;height:67.40px;background:#fdeddc;"></div>
<div class="b" style="left:1326.90px;top:400.40px;width:6.00px;height:67.40px;background:#f6a52c;"></div>
<div class="b" style="left:294.60px;top:418.60px;width:151.00px;height:31.00px;background:#fff;border:1px solid #dfe3e6;box-sizing:border-box;border-radius:3px;"></div>
<span class="t" style="left:301.80px;top:424.62px;font-size:12.5px;line-height:20px;color:#5a5a5a;letter-spacing:-0.222px;">01/2022 - 12/2022</span>
<svg class="b" style="left:819.30px;top:427.90px;" width="13.00" height="13.00" viewBox="-6.5 -6.5 13 13"><circle cx="0" cy="0" r="6" fill="#6e9fb3"/><circle cx="0" cy="-2.9" r="1.05" fill="#fff"/><path d="M-1.6,-1.1 H1.1 V2.6 H1.9 V3.7 H-1.9 V2.6 H-1.1 V0 H-1.6Z" fill="#fff"/></svg>
<div class="b" style="left:838.30px;top:418.60px;width:187.50px;height:31.00px;background:#fff;border:1px solid #dfe3e6;box-sizing:border-box;border-radius:3px;"></div>
<span class="t" style="left:844.90px;top:424.62px;font-size:12.5px;line-height:20px;color:#444;letter-spacing:-0.362px;">Subventions allouées</span>
<svg class="b" style="left:1005.40px;top:430.00px;" width="12.00" height="9.00" viewBox="0 0 12 9"><path d="M1,1.8 L6,6.8 L11,1.8" fill="none" stroke="#333" stroke-width="1.5" stroke-linecap="round" stroke-linejoin="round"/></svg>
<div class="b" style="left:1038.60px;top:418.60px;width:187.40px;height:31.00px;background:#fff;border:1px solid #dfe3e6;box-sizing:border-box;border-radius:3px;"></div>
<span class="t" style="left:1045.20px;top:424.62px;font-size:12.5px;line-height:20px;color:#444;letter-spacing:-0.404px;">Valeur réalisée</span>
<svg class="b" style="left:1205.60px;top:430.00px;" width="12.00" height="9.00" viewBox="0 0 12 9"><path d="M1,1.8 L6,6.8 L11,1.8" fill="none" stroke="#333" stroke-width="1.5" stroke-linecap="round" stroke-linejoin="round"/></svg>
<svg class="b" style="left:1344.30px;top:427.70px;" width="13.00" height="13.00" viewBox="-6.5 -6.5 13 13"><circle cx="0" cy="0" r="6" fill="#f6a52c"/><circle cx="0" cy="-2.9" r="1.05" fill="#fff"/><path d="M-1.6,-1.1 H1.1 V2.6 H1.9 V3.7 H-1.9 V2.6 H-1.1 V0 H-1.6Z" fill="#fff"/></svg>
<div class="b" style="left:1363.20px;top:418.60px;width:188.10px;height:31.00px;background:#fff;border:1px solid #dfe3e6;box-sizing:border-box;border-radius:3px;"></div>
<span class="t" style="left:1369.80px;top:424.62px;font-size:12.5px;line-height:20px;color:#444;letter-spacing:-0.255px;">Dépense publique</span>
<svg class="b" style="left:1530.90px;top:430.00px;" width="12.00" height="9.00" viewBox="0 0 12 9"><path d="M1,1.8 L6,6.8 L11,1.8" fill="none" stroke="#333" stroke-width="1.5" stroke-linecap="round" stroke-linejoin="round"/></svg>
<div class="b" style="left:1563.70px;top:418.60px;width:188.10px;height:31.00px;background:#fff;border:1px solid #dfe3e6;box-sizing:border-box;border-radius:3px;"></div>
<span class="t" style="left:1570.30px;top:424.62px;font-size:12.5px;line-height:20px;color:#444;letter-spacing:-0.410px;">Valeur réalisée</span>
<svg class="b" style="left:1731.40px;top:430.00px;" width="12.00" height="9.00" viewBox="0 0 12 9"><path d="M1,1.8 L6,6.8 L11,1.8" fill="none" stroke="#333" stroke-width="1.5" stroke-linecap="round" stroke-linejoin="round"/></svg>
<div class="b" style="left:265.00px;top:486.00px;width:1587.00px;height:1.20px;background:#eef0f0;"></div>
<span class="t" style="left:277.00px;top:498.82px;font-size:12.5px;line-height:20px;color:#3a3a3a;letter-spacing:-0.297px;">Evolution des subventions</span>
<div class="b" style="left:1839.90px;top:505.30px;width:1.10px;height:4.40px;background:#e6e9f0;"></div>
<svg class="b" style="left:264.00px;top:520.00px;" width="1588.00" height="620.00" viewBox="264 520 1588 620"><path d="M333.05,543.50 V1115.40" stroke="#ebebeb" stroke-width="1.4"/><path d="M467.45,543.50 V1115.40" stroke="#ebebeb" stroke-width="1.4"/><path d="M601.84,543.50 V1115.40" stroke="#ebebeb" stroke-width="1.4"/><path d="M736.24,543.50 V1115.40" stroke="#ebebeb" stroke-width="1.4"/><path d="M870.63,543.50 V1115.40" stroke="#ebebeb" stroke-width="1.4"/><path d="M1005.03,543.50 V1115.40" stroke="#ebebeb" stroke-width="1.4"/><path d="M1139.42,543.50 V1115.40" stroke="#ebebeb" stroke-width="1.4"/><path d="M1273.82,543.50 V1115.40" stroke="#ebebeb" stroke-width="1.4"/><path d="M1408.21,543.50 V1115.40" stroke="#ebebeb" stroke-width="1.4"/><path d="M1542.61,543.50 V1115.40" stroke="#ebebeb" stroke-width="1.4"/><path d="M1677.00,543.50 V1115.40" stroke="#ebebeb" stroke-width="1.4"/><path d="M1811.40,543.50 V1115.40" stroke="#ebebeb" stroke-width="1.4"/><path d="M325.05,543.50 H1811.40" stroke="#ebebeb" stroke-width="1.4"/><path d="M325.05,637.48 H1811.40" stroke="#ebebeb" stroke-width="1.4"/><path d="M325.05,731.47 H1811.40" stroke="#ebebeb" stroke-width="1.4"/><path d="M325.05,825.45 H1811.40" stroke="#ebebeb" stroke-width="1.4"/><path d="M325.05,919.43 H1811.40" stroke="#ebebeb" stroke-width="1.4"/><path d="M325.05,1013.42 H1811.40" stroke="#ebebeb" stroke-width="1.4"/><path d="M325.05,1107.40 H1811.40" stroke="#ebebeb" stroke-width="1.4"/><path d="M333.05,543.50 V1107.40" stroke="#dcdcdc" stroke-width="1.4"/><path d="M333.05,1107.40 H1811.40" stroke="#dcdcdc" stroke-width="1.4"/><path d="M333.05,1037.50 C359.93,1038.52 440.70,1044.08 467.45,1042.60 C494.46,1041.10 575.82,1019.30 601.84,1022.60 C629.58,1026.12 708.95,1075.40 736.24,1076.70 C762.71,1077.96 843.38,1037.00 870.63,1035.40 C897.14,1033.84 979.20,1064.38 1005.03,1060.90 C1032.95,1057.14 1112.58,999.11 1139.42,999.20 C1166.34,999.29 1245.99,1058.62 1273.82,1061.80 C1299.75,1064.76 1381.12,1031.06 1408.21,1029.90 C1434.88,1028.76 1515.86,1051.03 1542.61,1050.30 C1569.61,1049.57 1649.96,1023.59 1677.00,1022.60 C1703.72,1021.63 1784.52,1036.92 1811.40,1040.50" fill="none" stroke="#6599b0" stroke-width="3" stroke-linejoin="round" stroke-linecap="butt"/><circle cx="333.05" cy="1037.50" r="3.2" fill="rgba(101,153,176,0.3)" stroke="#6599b0" stroke-width="1.1"/><circle cx="467.45" cy="1042.60" r="3.2" fill="rgba(101,153,176,0.3)" stroke="#6599b0" stroke-width="1.1"/><circle cx="601.84" cy="1022.60" r="3.2" fill="rgba(101,153,176,0.3)" stroke="#6599b0" stroke-width="1.1"/><circle cx="736.24" cy="1076.70" r="3.2" fill="rgba(101,153,176,0.3)" stroke="#6599b0" stroke-width="1.1"/><circle cx="870.63" cy="1035.40" r="3.2" fill="rgba(101,153,176,0.3)" stroke="#6599b0" stroke-width="1.1"/><circle cx="1005.03" cy="1060.90" r="3.2" fill="rgba(101,153,176,0.3)" stroke="#6599b0" stroke-width="1.1"/><circle cx="1139.42" cy="999.20" r="3.2" fill="rgba(101,153,176,0.3)" stroke="#6599b0" stroke-width="1.1"/><circle cx="1273.82" cy="1061.80" r="3.2" fill="rgba(101,153,176,0.3)" stroke="#6599b0" stroke-width="1.1"/><circle cx="1408.21" cy="1029.90" r="3.2" fill="rgba(101,153,176,0.3)" stroke="#6599b0" stroke-width="1.1"/><circle cx="1542.61" cy="1050.30" r="3.2" fill="rgba(101,153,176,0.3)" stroke="#6599b0" stroke-width="1.1"/><circle cx="1677.00" cy="1022.60" r="3.2" fill="rgba(101,153,176,0.3)" stroke="#6599b0" stroke-width="1.1"/><circle cx="1811.40" cy="1040.50" r="3.2" fill="rgba(101,153,176,0.3)" stroke="#6599b0" stroke-width="1.1"/><path d="M333.05,637.90 C359.93,629.14 440.04,596.53 467.45,594.10 C493.79,591.77 575.40,608.16 601.84,614.10 C629.15,620.24 710.21,656.93 736.24,654.50 C763.97,651.91 843.86,588.74 870.63,589.00 C897.61,589.26 977.18,654.19 1005.03,657.10 C1030.94,659.81 1112.08,622.91 1139.42,617.10 C1165.84,611.49 1246.86,600.77 1273.82,600.00 C1300.62,599.23 1381.44,606.55 1408.21,609.40 C1435.20,612.27 1515.82,629.15 1542.61,628.60 C1569.58,628.05 1650.10,604.03 1677.00,603.90 C1703.86,603.77 1784.52,622.62 1811.40,627.30" fill="none" stroke="#f6a52c" stroke-width="3" stroke-linejoin="round" stroke-linecap="butt"/><circle cx="333.05" cy="637.90" r="3.2" fill="rgba(246,165,44,0.3)" stroke="#f6a52c" stroke-width="1.1"/><circle cx="467.45" cy="594.10" r="3.2" fill="rgba(246,165,44,0.3)" stroke="#f6a52c" stroke-width="1.1"/><circle cx="601.84" cy="614.10" r="3.2" fill="rgba(246,165,44,0.3)" stroke="#f6a52c" stroke-width="1.1"/><circle cx="736.24" cy="654.50" r="3.2" fill="rgba(246,165,44,0.3)" stroke="#f6a52c" stroke-width="1.1"/><circle cx="870.63" cy="589.00" r="3.2" fill="rgba(246,165,44,0.3)" stroke="#f6a52c" stroke-width="1.1"/><circle cx="1005.03" cy="657.10" r="3.2" fill="rgba(246,165,44,0.3)" stroke="#f6a52c" stroke-width="1.1"/><circle cx="1139.42" cy="617.10" r="3.2" fill="rgba(246,165,44,0.3)" stroke="#f6a52c" stroke-width="1.1"/><circle cx="1273.82" cy="600.00" r="3.2" fill="rgba(246,165,44,0.3)" stroke="#f6a52c" stroke-width="1.1"/><circle cx="1408.21" cy="609.40" r="3.2" fill="rgba(246,165,44,0.3)" stroke="#f6a52c" stroke-width="1.1"/><circle cx="1542.61" cy="628.60" r="3.2" fill="rgba(246,165,44,0.3)" stroke="#f6a52c" stroke-width="1.1"/><circle cx="1677.00" cy="603.90" r="3.2" fill="rgba(246,165,44,0.3)" stroke="#f6a52c" stroke-width="1.1"/><circle cx="1811.40" cy="627.30" r="3.2" fill="rgba(246,165,44,0.3)" stroke="#f6a52c" stroke-width="1.1"/></svg>
<span class="t" style="right:1557.00px;top:533.92px;font-size:12px;line-height:19px;color:#525252;letter-spacing:0.000px;word-spacing:-0.8px;">140 000</span>
<span class="t" style="right:1557.00px;top:627.90px;font-size:12px;line-height:19px;color:#525252;letter-spacing:0.000px;word-spacing:-0.8px;">120 000</span>
<span class="t" style="right:1557.00px;top:721.88px;font-size:12px;line-height:19px;color:#525252;letter-spacing:0.000px;word-spacing:-0.8px;">100 000</span>
<span class="t" style="right:1557.00px;top:815.87px;font-size:12px;line-height:19px;color:#525252;letter-spacing:0.000px;word-spacing:-0.8px;">80 000</span>
<span class="t" style="right:1557.00px;top:909.85px;font-size:12px;line-height:19px;color:#525252;letter-spacing:0.000px;word-spacing:-0.8px;">60 000</span>
<span class="t" style="right:1557.00px;top:1003.83px;font-size:12px;line-height:19px;color:#525252;letter-spacing:0.000px;word-spacing:-0.8px;">40 000</span>
<span class="t" style="right:1557.00px;top:1097.82px;font-size:12px;line-height:19px;color:#525252;letter-spacing:0.000px;word-spacing:-0.8px;">20 000</span>
<span class="t" style="left:133.05px;width:400px;text-align:center;top:1116.32px;font-size:12px;line-height:19px;color:#525252;letter-spacing:0.000px;">Jan 2022</span>
<span class="t" style="left:267.45px;width:400px;text-align:center;top:1116.32px;font-size:12px;line-height:19px;color:#525252;letter-spacing:0.000px;">Feb 2022</span>
<span class="t" style="left:401.84px;width:400px;text-align:center;top:1116.32px;font-size:12px;line-height:19px;color:#525252;letter-spacing:0.000px;">Mar 2022</span>
<span class="t" style="left:536.24px;width:400px;text-align:center;top:1116.32px;font-size:12px;line-height:19px;color:#525252;letter-spacing:0.000px;">Apr 2022</span>
<span class="t" style="left:670.63px;width:400px;text-align:center;top:1116.32px;font-size:12px;line-height:19px;color:#525252;letter-spacing:0.000px;">May 2022</span>
<span class="t" style="left:805.03px;width:400px;text-align:center;top:1116.32px;font-size:12px;line-height:19px;color:#525252;letter-spacing:0.000px;">Jun 2022</span>
<span class="t" style="left:939.42px;width:400px;text-align:center;top:1116.32px;font-size:12px;line-height:19px;color:#525252;letter-spacing:0.000px;">Jul 2022</span>
<span class="t" style="left:1073.82px;width:400px;text-align:center;top:1116.32px;font-size:12px;line-height:19px;color:#525252;letter-spacing:0.000px;">Aug 2022</span>
<span class="t" style="left:1208.21px;width:400px;text-align:center;top:1116.32px;font-size:12px;line-height:19px;color:#525252;letter-spacing:0.000px;">Sep 2022</span>
<span class="t" style="left:1342.61px;width:400px;text-align:center;top:1116.32px;font-size:12px;line-height:19px;color:#525252;letter-spacing:0.000px;">Oct 2022</span>
<span class="t" style="left:1477.00px;width:400px;text-align:center;top:1116.32px;font-size:12px;line-height:19px;color:#525252;letter-spacing:0.000px;">Nov 2022</span>
<span class="t" style="left:1611.40px;width:400px;text-align:center;top:1116.32px;font-size:12px;line-height:19px;color:#525252;letter-spacing:0.000px;">Dec 2022</span>
</div></div></body></html>
